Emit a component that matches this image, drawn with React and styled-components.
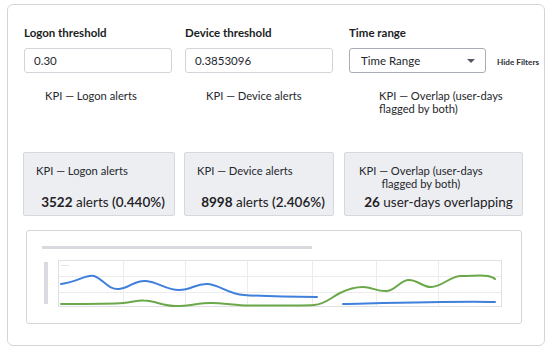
import React from "react";
import styled, { createGlobalStyle } from "styled-components";

const GlobalStyle = createGlobalStyle`
    body {
        margin: 0;
        background: #ffffff;
        font-family: Lato, "Noto Sans", "Liberation Sans", sans-serif;
        color: #1f2328;
    }
`;

const kpis = [
    { title: "KPI — Logon alerts", count: "3522", unit: "alerts", pct: "(0.440%)", width: 152 },
    { title: "KPI — Device alerts", count: "8998", unit: "alerts", pct: "(2.406%)", width: 150 },
    { title: "KPI — Overlap (user-days\nflagged by both)", count: "26", unit: "user-days overlapping", width: 179 },
];

const bluePath =
    "M3 24 C 20 22, 28 14, 36 16 C 44 18, 50 30, 61 29 C 72 28, 76 20, 88 21 C 100 22, 108 30, 121 30 C 134 30, 138 23, 150 24 C 162 25, 170 34, 186 35 C 200 36, 230 37, 259 37";
const blueTail = "M285 44 C 330 43, 400 41, 437 42";
const greenPath =
    "M3 44 C 30 44, 55 44, 65 43 C 75 42, 80 40, 86 40.5 C 98 41, 105 46, 118 46 C 132 46, 140 43, 153 43 C 166 43, 178 45.5, 191 45.5 C 210 45.5, 240 46, 256 45 C 268 44, 272 38, 282 33 C 292 28, 298 27, 305 27 C 314 27, 320 32, 329 31 C 338 30, 342 20, 351 20 C 360 20, 364 27, 373 27 C 384 27, 392 16, 403 16 C 414 16, 425 15, 430 16 C 434 17, 436 18, 437 19";

const LineChart = () => (
    <svg width="444" height="47" viewBox="0 0 444 47">
        <rect x="0.5" y="0.5" width="443" height="46" fill="#fff" stroke="#dfe0e3" />
        {[65, 127, 189, 254, 318, 380].map((x) => (
            <line key={x} x1={x + 0.5} y1="1" x2={x + 0.5} y2="46" stroke="#ececee" />
        ))}
        {[16, 32].map((y) => (
            <line key={y} x1="1" y1={y + 0.5} x2="443" y2={y + 0.5} stroke="#ececee" />
        ))}
        <line x1="3" y1="5.5" x2="11" y2="5.5" stroke="#e2e3e6" />
        <path d={bluePath} fill="none" stroke="#3f80dc" strokeWidth="2" strokeLinecap="round" />
        <path d={blueTail} fill="none" stroke="#3f80dc" strokeWidth="2" strokeLinecap="round" />
        <path d={greenPath} fill="none" stroke="#6ba84a" strokeWidth="2" strokeLinecap="round" />
    </svg>
);

const App = () => (
    <>
        <GlobalStyle />
        <Page>
            <Card>
                <FilterRow>
                    <FilterGroup $width={148}>
                        <Label>Logon threshold</Label>
                        <TextInput defaultValue="0.30" />
                    </FilterGroup>
                    <FilterGroup $width={148}>
                        <Label>Device threshold</Label>
                        <TextInput defaultValue="0.3853096" />
                    </FilterGroup>
                    <FilterGroup $width={137}>
                        <Label>Time range</Label>
                        <SelectBox>
                            <span>Time Range</span>
                            <Caret />
                        </SelectBox>
                    </FilterGroup>
                    <HideFilters>Hide Filters</HideFilters>
                </FilterRow>

                <CaptionRow>
                    <Caption $offset={21} $width={140}>KPI — Logon alerts</Caption>
                    <Caption $offset={23} $width={140}>KPI — Device alerts</Caption>
                    <Caption $offset={33} $width={165}>KPI — Overlap (user-days<br />flagged by both)</Caption>
                </CaptionRow>

                <KpiRow>
                    {kpis.map((k) => (
                        <KpiCard key={k.count} $width={k.width}>
                            <KpiTitle>{k.title}</KpiTitle>
                            <KpiValue>
                                <strong>{k.count}</strong> {k.unit}
                                {k.pct && <> <Pct>{k.pct}</Pct></>}
                            </KpiValue>
                        </KpiCard>
                    ))}
                </KpiRow>

                <ChartPanel>
                    <TitleSkeleton />
                    <ChartBody>
                        <AxisSkeleton />
                        <LineChart />
                    </ChartBody>
                </ChartPanel>
            </Card>
        </Page>
    </>
);

export default App;

const Page = styled.div`
    padding: 4px 5px 6px 7px;
`;

const Card = styled.div`
    width: 538px;
    height: 342px;
    box-sizing: border-box;
    border: 1px solid #d3d5da;
    border-radius: 6px;
    padding: 20px 0 0 16px;
    display: flex;
    flex-direction: column;
`;

const FilterRow = styled.div`
    display: flex;
    align-items: flex-end;
    gap: 13px;
`;

const FilterGroup = styled.div`
    width: ${(p) => p.$width}px;
    display: flex;
    flex-direction: column;
    gap: 7px;

    &:nth-child(3) {
        margin-left: 3px;
    }
`;

const Label = styled.label`
    font-size: 11.5px;
    font-weight: 700;
    line-height: 16px;
    color: #1b1e23;
`;

const TextInput = styled.input`
    box-sizing: border-box;
    width: 100%;
    height: 25px;
    padding: 0 9px;
    border: 1px solid #d2d4d9;
    border-radius: 3px;
    font-family: inherit;
    font-size: 11.5px;
    color: #24272c;
    outline: none;
`;

const SelectBox = styled.div`
    box-sizing: border-box;
    height: 25px;
    padding: 0 10px 0 11px;
    border: 1px solid #a9adb5;
    border-radius: 3px;
    display: flex;
    align-items: center;
    justify-content: space-between;
    font-size: 11.5px;
    color: #24272c;
`;

const Caret = styled.span`
    width: 0;
    height: 0;
    border-left: 4px solid transparent;
    border-right: 4px solid transparent;
    border-top: 4px solid #555a62;
`;

const HideFilters = styled.span`
    font-size: 8.2px;
    font-weight: 700;
    color: #2b2f35;
    margin-left: -2px;
    padding-bottom: 6px;
`;

const CaptionRow = styled.div`
    display: flex;
    height: 55px;
    padding-top: 16px;
    box-sizing: border-box;
`;

const Caption = styled.div`
    width: ${(p) => p.$width}px;
    padding-left: ${(p) => p.$offset}px;
    flex-shrink: 0;
    font-size: 11.2px;
    line-height: 13px;
    color: #25282d;

    &:nth-child(2) {
        margin-left: -2px;
    }
`;

const KpiRow = styled.div`
    display: flex;
    gap: 9px;
    margin-left: -1px;
    margin-top: 24px;
`;

const KpiCard = styled.div`
    width: ${(p) => p.$width}px;
    height: 64px;
    box-sizing: border-box;
    background: #eceef1;
    border: 1px solid #d6d8dd;
    border-radius: 2px;
    padding: 11px 4px 0 12px;
    display: flex;
    flex-direction: column;

    &:last-child {
        margin-left: 1px;
        padding-left: 14px;
    }
`;

const KpiTitle = styled.div`
    align-self: flex-start;
    white-space: pre-line;
    text-align: center;
    font-size: 11.2px;
    line-height: 13px;
    color: #25282d;
    min-height: 26px;
`;

const KpiValue = styled.div`
    text-align: center;
    white-space: nowrap;
    font-size: 13.5px;
    line-height: 18px;
    color: #1e2126;
    margin-top: 3px;

    strong {
        font-weight: 700;
    }
`;

const Pct = styled.span`
    font-weight: 600;
`;

const ChartPanel = styled.div`
    width: 496px;
    height: 94px;
    box-sizing: border-box;
    margin: 14px 0 0 2px;
    border: 1px solid #d3d5da;
    border-radius: 3px;
    padding: 15px 0 0 15px;
    display: flex;
    flex-direction: column;
`;

const TitleSkeleton = styled.div`
    width: 270px;
    height: 3px;
    background: #d9dadf;
`;

const ChartBody = styled.div`
    display: flex;
    align-items: flex-start;
    gap: 10px;
    margin-top: 11px;
    padding-left: 2px;
`;

const AxisSkeleton = styled.div`
    width: 4px;
    height: 42px;
    margin-top: 2px;
    background: #dadbe0;
`;
